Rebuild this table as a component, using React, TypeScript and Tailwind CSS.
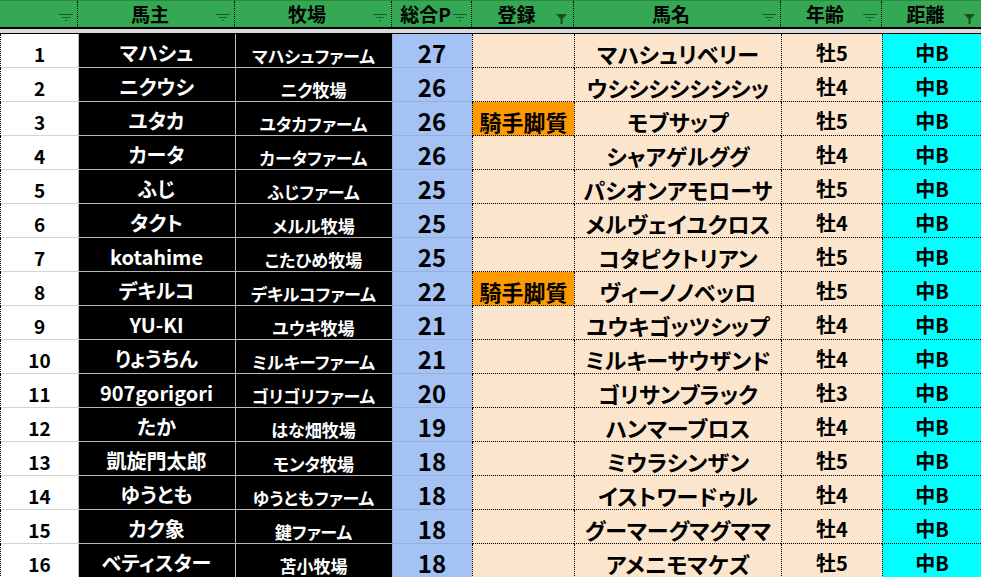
const rows = [
  ['マハシュ', 'マハシュファーム', 27, '', 'マハシュリベリー', '牡5'],
  ['ニクウシ', 'ニク牧場', 26, '', 'ウシシシシシシシッ', '牡4'],
  ['ユタカ', 'ユタカファーム', 26, '騎手脚質', 'モブサップ', '牡5'],
  ['カータ', 'カータファーム', 26, '', 'シャアゲルググ', '牡4'],
  ['ふじ', 'ふじファーム', 25, '', 'パシオンアモローサ', '牡5'],
  ['タクト', 'メルル牧場', 25, '', 'メルヴェイユクロス', '牡4'],
  ['kotahime', 'こたひめ牧場', 25, '', 'コタピクトリアン', '牡5'],
  ['デキルコ', 'デキルコファーム', 22, '騎手脚質', 'ヴィーノノベッロ', '牡5'],
  ['YU-KI', 'ユウキ牧場', 21, '', 'ユウキゴッツシップ', '牡4'],
  ['りょうちん', 'ミルキーファーム', 21, '', 'ミルキーサウザンド', '牡4'],
  ['907gorigori', 'ゴリゴリファーム', 20, '', 'ゴリサンブラック', '牡3'],
  ['たか', 'はな畑牧場', 19, '', 'ハンマーブロス', '牡4'],
  ['凱旋門太郎', 'モンタ牧場', 18, '', 'ミウラシンザン', '牡5'],
  ['ゆうとも', 'ゆうともファーム', 18, '', 'イストワードゥル', '牡4'],
  ['カク象', '鍵ファーム', 18, '', 'グーマーグマグママ', '牡4'],
  ['ベティスター', '苫小牧場', 18, '', 'アメニモマケズ', '牡5'],
] as const;

function FilterIcon({ active }: { active?: boolean }) {
  if (active) {
    return (
      <svg width="11" height="10" viewBox="0 0 11 10" className="absolute right-[6px] bottom-[3px]">
        <path d="M0 0h11L6.5 5v5h-2V5z" fill="#1c4a2a" />
      </svg>
    );
  }
  return (
    <svg width="14" height="8" viewBox="0 0 14 8" className="absolute right-[4px] bottom-[5px]">
      <rect x="0" y="0" width="14" height="1" fill="#1f5a33" />
      <rect x="3" y="3" width="8" height="1" fill="#1f5a33" />
      <rect x="6" y="6" width="2" height="1" fill="#1f5a33" />
    </svg>
  );
}

function HeadCell({ label, active, last }: { label: string; active?: boolean; last?: boolean }) {
  return (
    <div className={`relative flex items-center justify-center h-full pb-[2px] ${last ? '' : 'border-r border-dotted border-black'}`}>
      <span className="text-[19px] leading-none font-bold text-black pr-3">{label}</span>
      <FilterIcon active={active} />
    </div>
  );
}

export default function App() {
  return (
    <div className="w-[981px] h-[577px] overflow-hidden bg-white font-['Noto_Sans_CJK_JP',sans-serif] [font-feature-settings:'palt']">
      <div className="grid grid-cols-[78px_157px_157px_80px_102px_207px_101px_1fr] h-[27px] bg-[#34a853] border-t border-[#2a8a44]">
        <HeadCell label="" />
        <HeadCell label="馬主" />
        <HeadCell label="牧場" />
        <HeadCell label="総合P" />
        <HeadCell label="登録" active />
        <HeadCell label="馬名" />
        <HeadCell label="年齢" />
        <HeadCell label="距離" active last />
      </div>
      <div className="h-[2px] bg-black" />
      <div className="h-[4px] bg-[#d9dadd]" />
      <div className="h-px bg-black" />
      {rows.map(([owner, farm, pts, reg, horse, age], i) => (
        <div key={i} className="grid grid-cols-[78px_157px_157px_80px_102px_207px_101px_1fr] h-[34px] leading-none font-bold whitespace-nowrap">
          <div className="flex items-center justify-center pt-[4px] border-l border-dotted border-black shadow-[inset_0_-1px_0_#d4d4d4] text-[19px] text-black">
            {i + 1}
          </div>
          <div className="flex items-center justify-center pt-[3px] bg-black shadow-[inset_1px_-1px_0_#b7b7b7] text-[20px] text-white">
            {owner}
          </div>
          <div className="flex items-center justify-center pt-[8px] bg-black shadow-[inset_1px_-1px_0_#b7b7b7] text-[17px] text-white">
            {farm}
          </div>
          <div className="flex items-center justify-center pt-[3px] bg-[#a4c2f4] shadow-[inset_1px_-1px_0_#98aedb] text-[24px] text-black">
            {pts}
          </div>
          <div className={`flex items-center justify-center pt-[4px] border-l border-b border-dotted border-black text-[22px] text-black ${reg ? 'bg-[#ff9900]' : 'bg-[#fce5cd]'}`}>
            {reg}
          </div>
          <div className="flex items-center justify-center pt-[4px] bg-[#fce5cd] border-l border-b border-dotted border-black text-[22px] text-black">
            {horse}
          </div>
          <div className="flex items-center justify-center pt-[4px] bg-[#fce5cd] border-l border-b border-dotted border-black text-[20px] text-black">
            {age}
          </div>
          <div className="flex items-center justify-center pt-[4px] bg-[#00ffff] border-l border-b border-dotted border-black text-[20px] text-black">
            中B
          </div>
        </div>
      ))}
    </div>
  );
}
